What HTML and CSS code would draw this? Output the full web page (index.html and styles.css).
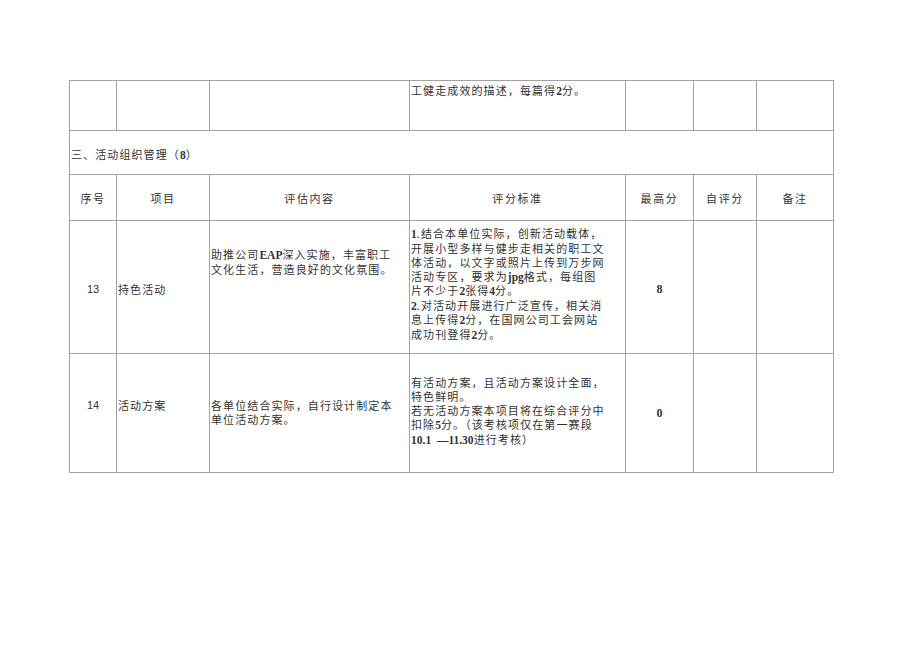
FILE: index.html
```html
<!DOCTYPE html>
<html lang="zh">
<head>
<meta charset="utf-8">
<link rel="stylesheet" href="styles.css">
</head>
<body>
<table class="sheet">
  <colgroup>
    <col class="c1"><col class="c2"><col class="c3"><col class="c4"><col class="c5"><col class="c6"><col class="c7">
  </colgroup>
  <tr class="r-prev">
    <td></td><td></td><td></td>
    <td class="std top">工健走成效的描述，每篇得<span class="lat">2</span>分。</td>
    <td></td><td></td><td></td>
  </tr>
  <tr class="r-sec">
    <td colspan="7" class="sec">三、活动组织管理（<span class="lat">8</span>）</td>
  </tr>
  <tr class="r-head">
    <td class="ctr">序号</td>
    <td class="ctr">项目</td>
    <td class="ctr">评估内容</td>
    <td class="ctr">评分标准</td>
    <td class="ctr">最高分</td>
    <td class="ctr">自评分</td>
    <td class="ctr">备注</td>
  </tr>
  <tr class="r13">
    <td class="num">13</td>
    <td class="item">持色活动</td>
    <td class="desc d13">助推公司<span class="lat">EAP</span>深入实施，丰富职工<br>文化生活，营造良好的文化氛围。</td>
    <td class="std s13"><span class="lat">1</span>.结合本单位实际，创新活动载体，<br>开展小型多样与健步走相关的职工文<br>体活动，以文字或照片上传到万步网<br>活动专区，要求为<span class="lat">jpg</span>格式，每组图<br>片不少于<span class="lat">2</span>张得<span class="lat">4</span>分。<br><span class="lat">2</span>.对活动开展进行广泛宣传，相关消<br>息上传得<span class="lat">2</span>分，在国网公司工会网站<br>成功刊登得<span class="lat">2</span>分。</td>
    <td class="score">8</td>
    <td></td><td></td>
  </tr>
  <tr class="r14">
    <td class="num n14">14</td>
    <td class="item i14">活动方案</td>
    <td class="desc d14">各单位结合实际，自行设计制定本<br>单位活动方案。</td>
    <td class="std s14">有活动方案，且活动方案设计全面，<br>特色鲜明。<br>若无活动方案本项目将在综合评分中<br>扣除<span class="lat">5</span>分。（该考核项仅在第一赛段<br><span class="lat">10.1&nbsp;&nbsp;—11.30</span>进行考核）</td>
    <td class="score sc14">0</td>
    <td></td><td></td>
  </tr>
</table>
</body>
</html>
```

FILE: styles.css
```css
html, body {
  margin: 0;
  padding: 0;
  background: #ffffff;
}
body {
  padding: 80px 0 0 69px;
  font-family: "Noto Sans CJK SC", "Noto Sans", sans-serif;
  color: #333333;
}
.sheet {
  border-collapse: collapse;
  table-layout: fixed;
  width: 765px;
  font-size: 11px;
  letter-spacing: 1.1px;
  line-height: 14px;
}
.c1 { width: 47px; }
.c2 { width: 93px; }
.c3 { width: 200px; }
.c4 { width: 216px; }
.c5 { width: 68px; }
.c6 { width: 63px; }
.c7 { width: 77px; }
.sheet td {
  border: 1px solid #a3a3a3;
  padding: 0 1px;
  vertical-align: middle;
  overflow: hidden;
  white-space: nowrap;
}
.r-prev { height: 50px; }
.r-sec { height: 44px; }
.r-head { height: 46px; }
.r13 { height: 133px; }
.r14 { height: 119px; }
.top { vertical-align: top !important; padding-top: 2px !important; }
.sec { padding-left: 1px; padding-top: 4px !important; }
.ctr { text-align: center; letter-spacing: 1.6px; }
.lat {
  font-family: "Liberation Serif", serif;
  font-weight: bold;
  letter-spacing: 0;
  font-size: 11.5px;
  line-height: 1;
}
.num {
  text-align: center;
  font-family: "Liberation Sans", Arial, sans-serif;
  letter-spacing: 0;
  font-size: 11px;
  padding-top: 4px !important;
}
.item { padding-top: 4px !important; }
.desc {
  vertical-align: top !important;
  padding-top: 26px !important;
}
.std { padding-left: 1px !important; }
.s13 { vertical-align: top !important; padding-top: 5px !important; }
.s14 { vertical-align: top !important; padding-top: 21px !important; }
.score {
  text-align: center;
  font-family: "Liberation Serif", serif;
  font-weight: bold;
  font-size: 12px;
  letter-spacing: 0;
  padding-top: 4px !important;
}
.n14, .i14, .d14 {
  vertical-align: top !important;
  padding-top: 44px !important;
}
.sc14 {
  vertical-align: top !important;
  padding-top: 52px !important;
}
```
